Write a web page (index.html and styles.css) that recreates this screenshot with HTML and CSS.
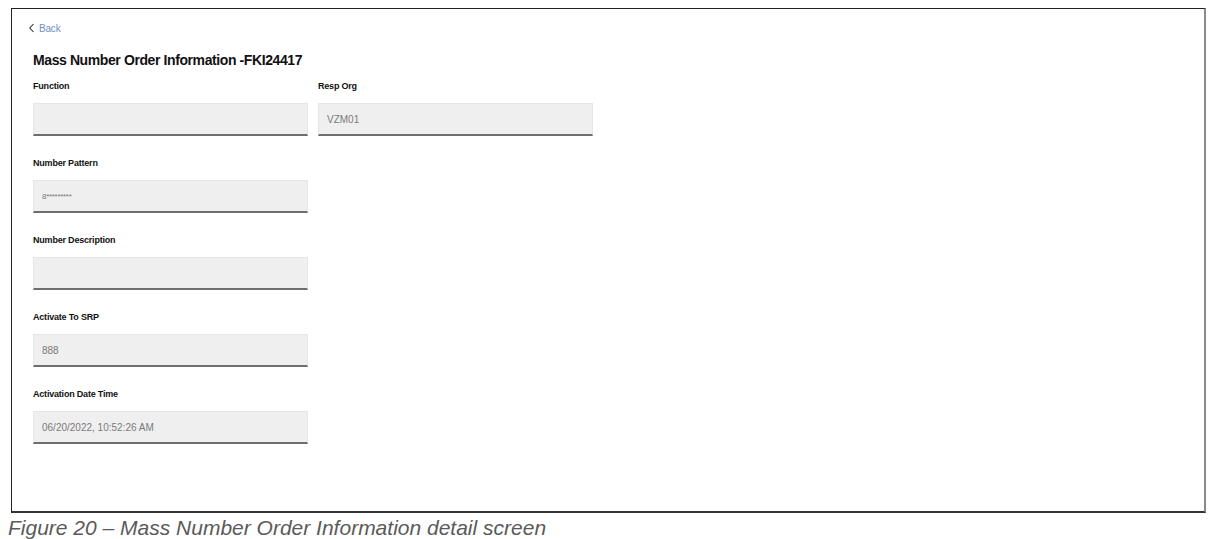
FILE: index.html
```html
<!DOCTYPE html>
<html>
<head>
<meta charset="utf-8">
<link rel="stylesheet" href="styles.css">
</head>
<body>
<div class="frame">
  <a class="back" href="#">
    <svg class="chev" width="8" height="10" viewBox="0 0 8 10"><path d="M5.5 1 L1.8 5 L5.5 9" fill="none" stroke="#333" stroke-width="1.1"/></svg>
    <span>Back</span>
  </a>
  <h1 class="title">Mass Number Order Information -FKI24417</h1>
  <div class="grid">
    <div class="field">
      <div class="label">Function</div>
      <div class="input"></div>
    </div>
    <div class="field">
      <div class="label">Resp Org</div>
      <div class="input">VZM01</div>
    </div>
    <div class="field">
      <div class="label">Number Pattern</div>
      <div class="input small">8*********</div>
    </div>
    <div class="field empty"></div>
    <div class="field">
      <div class="label">Number Description</div>
      <div class="input"></div>
    </div>
    <div class="field empty"></div>
    <div class="field">
      <div class="label">Activate To SRP</div>
      <div class="input">888</div>
    </div>
    <div class="field empty"></div>
    <div class="field">
      <div class="label">Activation Date Time</div>
      <div class="input">06/20/2022, 10:52:26 AM</div>
    </div>
  </div>
</div>
<p class="caption">Figure 20 – Mass Number Order Information detail screen</p>
</body>
</html>
```

FILE: styles.css
```css
html, body {
  margin: 0;
  padding: 0;
  background: #ffffff;
}
body {
  font-family: "Liberation Sans", Arial, sans-serif;
}
.frame {
  box-sizing: border-box;
  margin: 8px 0 0 11px;
  width: 1195px;
  height: 505px;
  border: 1px solid #222;
  border-right: 2px solid #8a8a8a;
  border-bottom: 2px solid #333;
  padding: 12px 0 0 21px;
}
.back {
  display: flex;
  align-items: center;
  gap: 3px;
  height: 14px;
  margin-left: -5px;
  font-size: 10px;
  color: #6f8fc4;
  text-decoration: none;
  letter-spacing: -0.2px;
}
.chev {
  display: block;
}
.title {
  margin: 16px 0 0 0;
  font-size: 14px;
  line-height: 18px;
  font-weight: bold;
  color: #111;
  letter-spacing: -0.4px;
}
.grid {
  margin-top: 10px;
  display: grid;
  grid-template-columns: 275px 275px;
  column-gap: 10px;
  row-gap: 20px;
}
.label {
  font-size: 9px;
  line-height: 14px;
  font-weight: bold;
  color: #111;
  letter-spacing: -0.2px;
  height: 14px;
}
.input {
  box-sizing: border-box;
  margin-top: 10px;
  height: 33px;
  background: #efefef;
  border-top: 1px solid #e6e6e6;
  border-left: 1px solid #e6e6e6;
  border-right: 1px solid #e6e6e6;
  border-bottom: 2px solid #6e6e6e;
  padding-left: 8px;
  display: flex;
  align-items: center;
  font-size: 10px;
  color: #7a7a7a;
}
.input.small {
  font-size: 8px;
  letter-spacing: -0.3px;
}
.caption {
  margin: 3px 0 0 8px;
  font-style: italic;
  font-size: 21px;
  line-height: 24px;
  color: #5a5a5a;
}
```
